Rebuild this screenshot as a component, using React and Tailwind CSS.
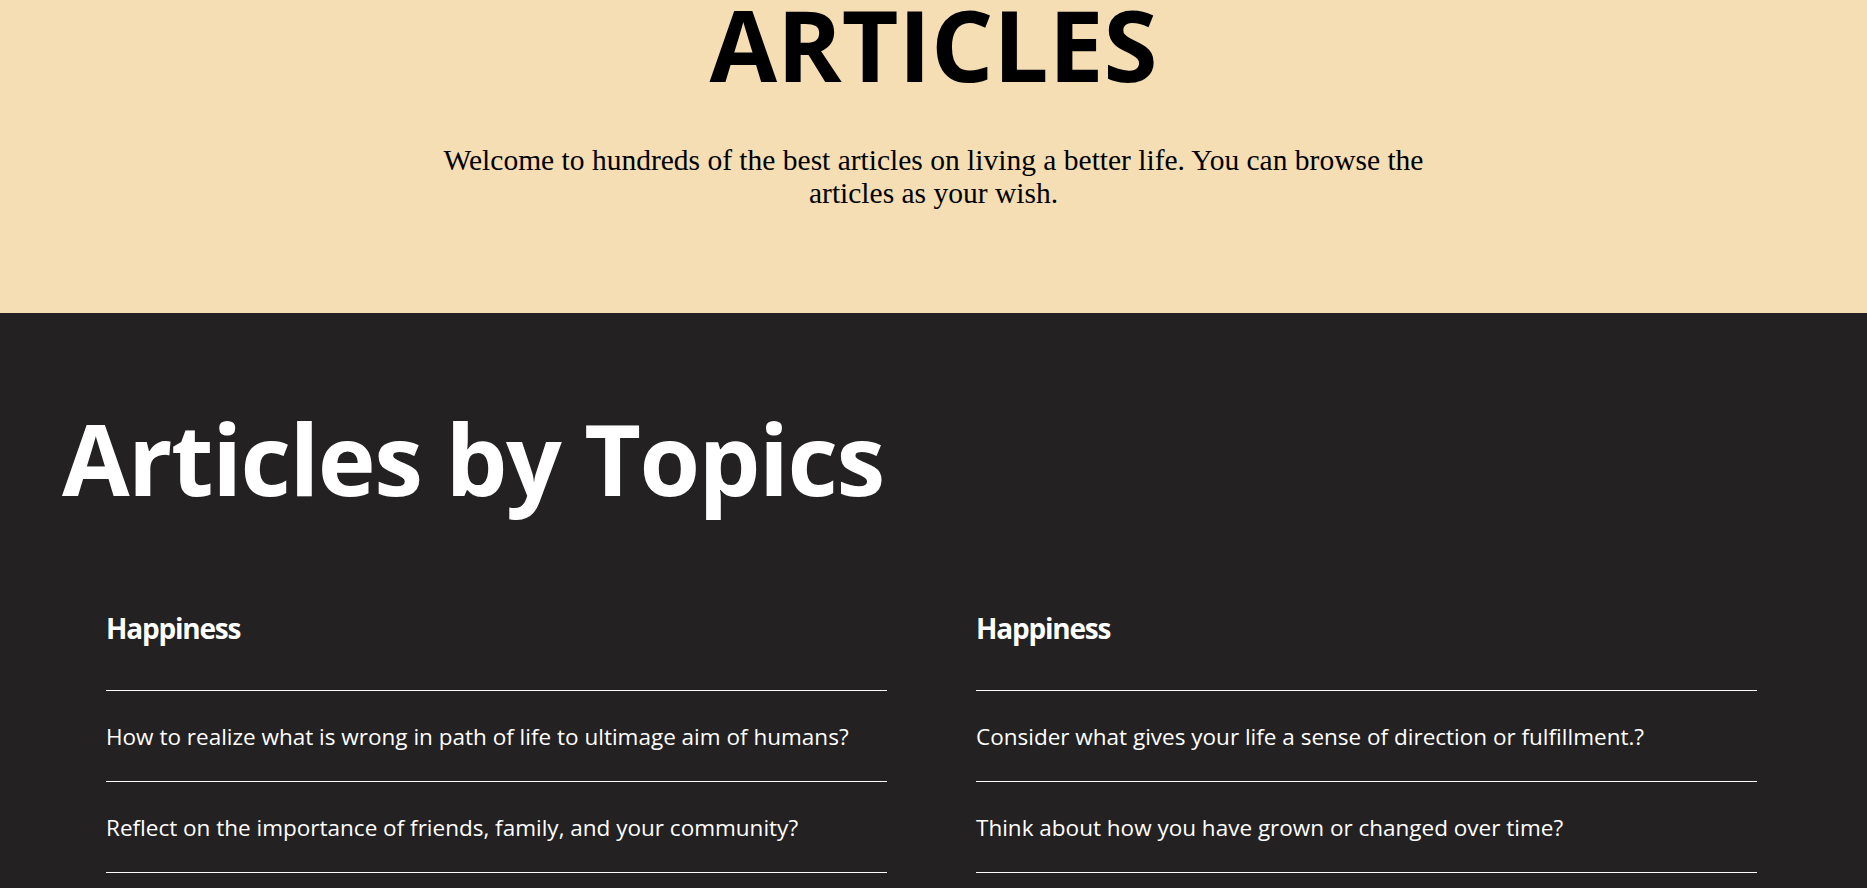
import React from "react";

const columns = [
  {
    title: "Happiness",
    items: [
      "How to realize what is wrong in path of life to ultimage aim of humans?",
      "Reflect on the importance of friends, family, and your community?",
    ],
  },
  {
    title: "Happiness",
    items: [
      "Consider what gives your life a sense of direction or fulfillment.?",
      "Think about how you have grown or changed over time?",
    ],
  },
];

export default function App() {
  return (
    <div className="w-full" style={{ fontFamily: '"Open Sans", "Noto Sans", sans-serif' }}>
      <section className="h-[313px] bg-[#f5deb3] text-center overflow-hidden">
        <h1 className="mt-[-5px] text-[98px] leading-[98px] font-bold text-black">ARTICLES</h1>
        <p
          className="mx-auto mt-[51px] max-w-[1000px] text-[29.5px] leading-[33px] text-black"
          style={{ fontFamily: '"Liberation Serif", "Times New Roman", serif' }}
        >
          Welcome to hundreds of the best articles on living a better life. You can browse the articles as your wish.
        </p>
      </section>
      <section className="bg-[#232122] text-white pt-[96px] pb-[15px]">
        <h2 className="pl-[62px] text-[98px] leading-[98px] font-bold tracking-[-1.5px]">Articles by Topics</h2>
        <div className="mt-[107px] grid grid-cols-2 gap-x-[89px] pl-[106px] pr-[110px]">
          {columns.map((col, i) => (
            <div key={i} className="flex flex-col">
              <h3 className="border-b border-white pb-[48px] text-[28px] leading-[28px] font-bold tracking-[-1.2px]">
                {col.title}
              </h3>
              {col.items.map((item, j) => (
                <div key={j} className="flex h-[91px] items-center border-b border-white pt-[2px]">
                  <span className="text-[22.5px] leading-[32px]">{item}</span>
                </div>
              ))}
            </div>
          ))}
        </div>
      </section>
    </div>
  );
}
